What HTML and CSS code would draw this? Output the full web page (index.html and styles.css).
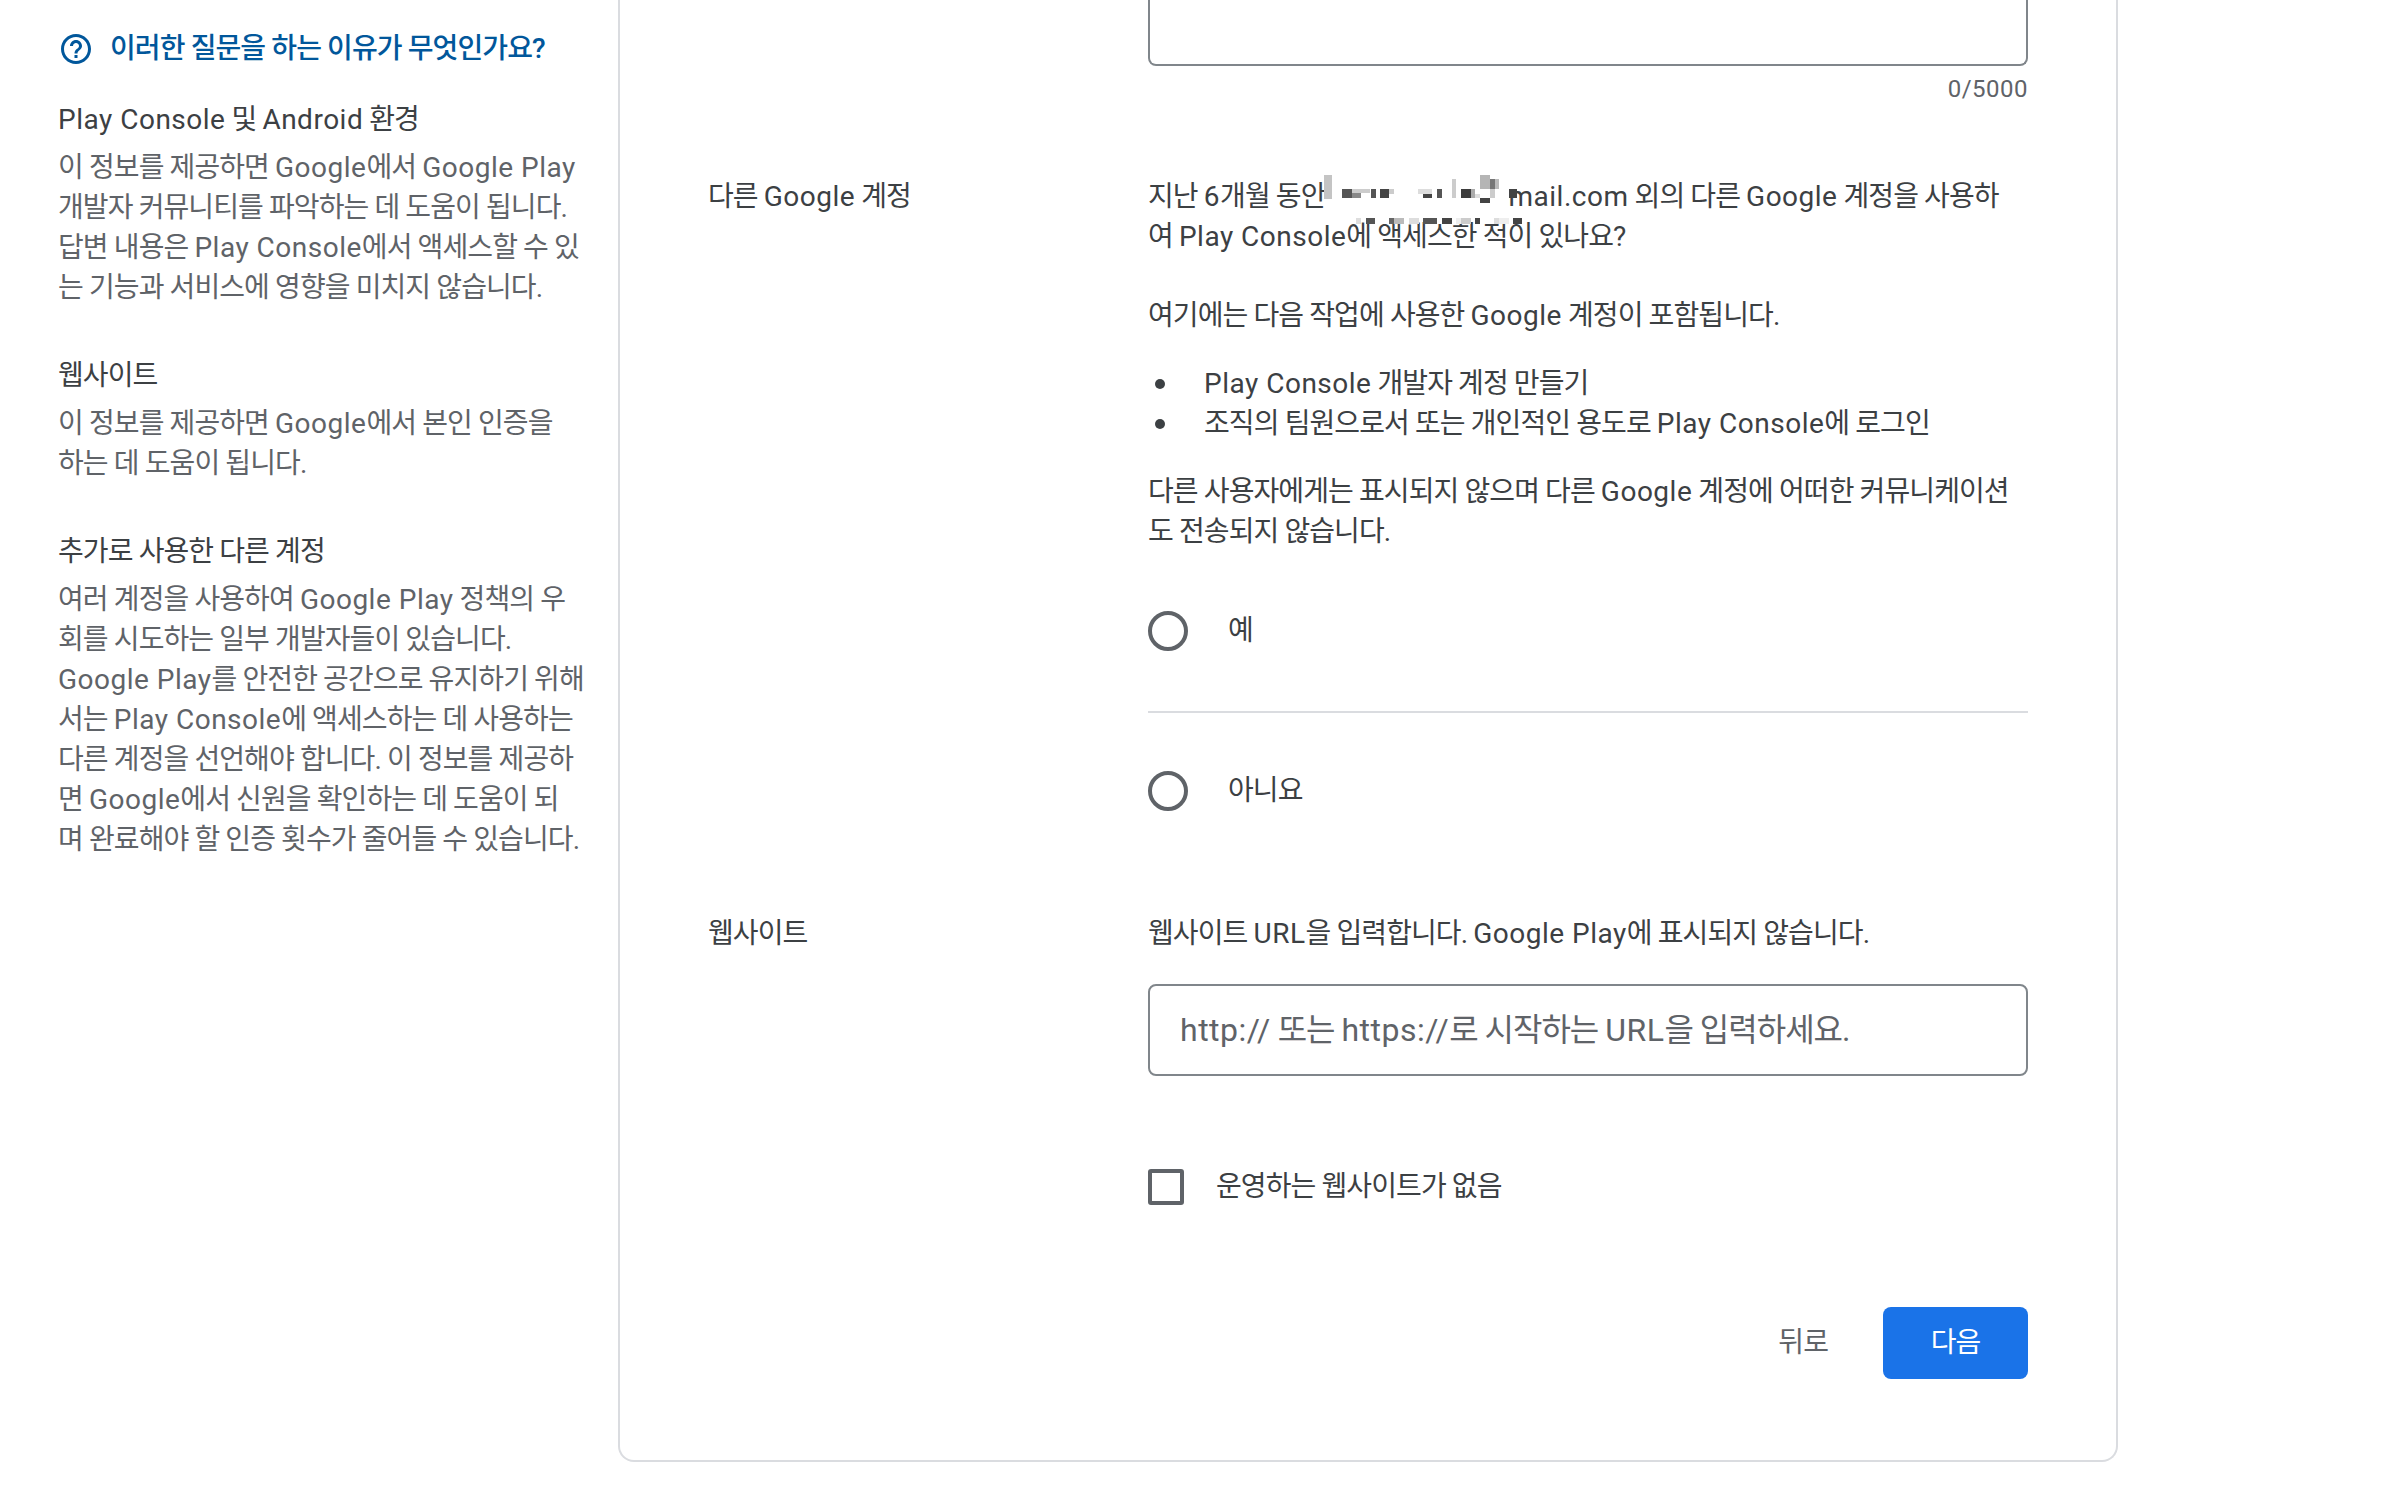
FILE: index.html
```html
<!DOCTYPE html>
<html lang="ko">

<head>
    <meta charset="UTF-8">
    <meta name="viewport" content="width=device-width, initial-scale=1.0">
    <title>Play Console 계정 정보</title>
    <link rel="stylesheet" href="styles.css">
</head>

<body>
    <div class="page">
        <aside class="help">
            <div class="help-title">
                <svg class="help-icon" viewBox="0 0 24 24">
                    <path d="M11 18h2v-2h-2v2zm1-16C6.48 2 2 6.48 2 12s4.48 10 10 10 10-4.48 10-10S17.52 2 12 2zm0 18c-4.41 0-8-3.59-8-8s3.59-8 8-8 8 3.59 8 8-3.59 8-8 8zm0-14c-2.21 0-4 1.79-4 4h2c0-1.1.9-2 2-2s2 .9 2 2c0 2-3 1.75-3 5h2c0-2.25 3-2.5 3-5 0-2.21-1.79-4-4-4z" />
                </svg>
                <span>이러한 질문을 하는 이유가 무엇인가요?</span>
            </div>

            <div class="help-block">
                <h4><span class="en">Play Console</span> 및 <span class="en">Android</span> 환경</h4>
                <p>이 정보를 제공하면 <span class="en">Google</span>에서 <span class="en">Google Play</span><br>개발자 커뮤니티를 파악하는 데 도움이 됩니다.<br>답변 내용은 <span class="en">Play Console</span>에서 액세스할 수 있<br>는 기능과 서비스에 영향을 미치지 않습니다.</p>
            </div>
            <div class="help-block">
                <h4>웹사이트</h4>
                <p>이 정보를 제공하면 <span class="en">Google</span>에서 본인 인증을<br>하는 데 도움이 됩니다.</p>
            </div>
            <div class="help-block">
                <h4>추가로 사용한 다른 계정</h4>
                <p>여러 계정을 사용하여 <span class="en">Google Play</span> 정책의 우<br>회를 시도하는 일부 개발자들이 있습니다.<br><span class="en">Google Play</span>를 안전한 공간으로 유지하기 위해<br>서는 <span class="en">Play Console</span>에 액세스하는 데 사용하는<br>다른 계정을 선언해야 합니다. 이 정보를 제공하<br>면 <span class="en">Google</span>에서 신원을 확인하는 데 도움이 되<br>며 완료해야 할 인증 횟수가 줄어들 수 있습니다.</p>
            </div>
        </aside>

        <main class="card">
            <div class="textarea-row">
                <div class="textarea-box"></div>
                <div class="counter">0/5000</div>
            </div>

            <section class="form-row">
                <div class="row-label">다른 <span class="en">Google</span> 계정</div>
                <div class="row-body">
                    <p class="para">지난 <span class="en">6</span>개월 동안<span class="redact">
                            <!-- 이메일 가림 -->
                            <svg class="redact-pixels" width="200" height="52" viewBox="1320 174 200 52" shape-rendering="crispEdges">
                                <rect x="1320" y="176" width="8" height="24" fill="#c4c4c4" />
                                <rect x="1338" y="190" width="10" height="9" fill="#555" />
                                <rect x="1348" y="194" width="9" height="5" fill="#888" />
                                <rect x="1348" y="190" width="18" height="4" fill="#ccc" />
                                <rect x="1367" y="190" width="5" height="9" fill="#555" />
                                <rect x="1376" y="190" width="9" height="9" fill="#444" />
                                <rect x="1385" y="190" width="5" height="5" fill="#ccc" />
                                <rect x="1414" y="190" width="14" height="5" fill="#ddd" />
                                <rect x="1419" y="195" width="9" height="4" fill="#444" />
                                <rect x="1433" y="190" width="5" height="9" fill="#555" />
                                <rect x="1448" y="180" width="4" height="19" fill="#ccc" />
                                <rect x="1457" y="190" width="10" height="9" fill="#3c3c3c" />
                                <rect x="1467" y="190" width="4" height="9" fill="#aaa" />
                                <rect x="1471" y="195" width="5" height="4" fill="#ddd" />
                                <rect x="1476" y="176" width="10" height="14" fill="#b5b5b5" />
                                <rect x="1486" y="180" width="5" height="10" fill="#777" />
                                <rect x="1491" y="180" width="4" height="10" fill="#bbb" />
                                <rect x="1486" y="190" width="5" height="9" fill="#ccc" />
                                <rect x="1476" y="199" width="10" height="5" fill="#444" />
                                <rect x="1505" y="190" width="8" height="9" fill="#444" />
                                <rect x="1352" y="219" width="5" height="6" fill="#ddd" />
                                <rect x="1362" y="219" width="9" height="6" fill="#555" />
                                <rect x="1385" y="219" width="5" height="6" fill="#666" />
                                <rect x="1390" y="219" width="10" height="6" fill="#bbb" />
                                <rect x="1405" y="219" width="10" height="6" fill="#ddd" />
                                <rect x="1419" y="219" width="14" height="6" fill="#555" />
                                <rect x="1438" y="219" width="10" height="6" fill="#444" />
                                <rect x="1452" y="219" width="5" height="6" fill="#eee" />
                                <rect x="1457" y="219" width="10" height="6" fill="#ccc" />
                                <rect x="1471" y="219" width="5" height="6" fill="#444" />
                                <rect x="1490" y="219" width="5" height="6" fill="#ddd" />
                                <rect x="1495" y="219" width="10" height="6" fill="#eee" />
                                <rect x="1509" y="219" width="9" height="6" fill="#444" />
                            </svg>
                        </span><span class="en">mail.com</span> 외의 다른 <span class="en">Google</span> 계정을 사용하<br>여 <span class="en">Play Console</span>에 액세스한 적이 있나요?</p>
                    <p class="para gap-top">여기에는 다음 작업에 사용한 <span class="en">Google</span> 계정이 포함됩니다.</p>
                    <ul class="list">
                        <li><span class="en">Play Console</span> 개발자 계정 만들기</li>
                        <li>조직의 팀원으로서 또는 개인적인 용도로 <span class="en">Play Console</span>에 로그인</li>
                    </ul>
                    <p class="para">다른 사용자에게는 표시되지 않으며 다른 <span class="en">Google</span> 계정에 어떠한 커뮤니케이션<br>도 전송되지 않습니다.</p>
                    <div class="radio-row">
                        <span class="radio"></span>
                        <span>예</span>
                    </div>
                    <div class="radio-row second">
                        <span class="radio"></span>
                        <span>아니요</span>
                    </div>
                </div>
            </section>

            <section class="form-row site-row">
                <div class="row-label">웹사이트</div>
                <div class="row-body">
                    <p class="para">웹사이트 <span class="en">URL</span>을 입력합니다. <span class="en">Google Play</span>에 표시되지 않습니다.</p>
                    <div class="url-input">
                        <span><span class="en">http://</span> 또는 <span class="en">https://</span>로 시작하는 <span class="en">URL</span>을 입력하세요.</span>
                    </div>
                    <div class="check-row">
                        <span class="checkbox"></span>
                        <span>운영하는 웹사이트가 없음</span>
                    </div>
                </div>
            </section>

            <div class="actions">
                <button class="btn-back">뒤로</button>
                <button class="btn-next">다음</button>
            </div>
        </main>
    </div>
</body>

</html>
```

FILE: styles.css
```css
* {
    box-sizing: border-box;
}

body {
    margin: 0;
    background: #fff;
    color: #3c4043;
    font-family: Roboto, "Noto Sans CJK KR", sans-serif;
    font-size: 28px;
    line-height: 40px;
    letter-spacing: -0.9px;
}

/* Latin runs keep Roboto's tracking, Hangul is tighter */
.en {
    letter-spacing: 0.5px;
}

.page {
    display: flex;
    align-items: flex-start;
    height: 1490px;
    overflow: hidden;
}

/* Left help column */
.help {
    width: 618px;
    flex: none;
    padding: 29px 0 0 58px;
}

.help-title {
    display: flex;
    align-items: center;
    gap: 16px;
    color: #01579b;
    font-weight: 500;
}

.help-icon {
    width: 36px;
    height: 36px;
    fill: #01579b;
    flex: none;
}

.help-block {
    margin-top: 31px;
}

.help-block + .help-block {
    margin-top: 48px;
}

.help-block h4 {
    margin: 0 0 8px;
    font-size: 28px;
    font-weight: 400;
    color: #3c4043;
}

.help-block p {
    margin: 0;
    color: #5f6368;
}

/* Card */
.card {
    width: 1500px;
    height: 1462px;
    flex: none;
    border: 2px solid #dadce0;
    border-top: none;
    border-radius: 0 0 16px 16px;
    padding: 0 88px 0 88px;
}

.textarea-row {
    margin-left: 440px;
}

.textarea-box {
    height: 66px;
    border: 2px solid #80868b;
    border-top: none;
    border-radius: 0 0 8px 8px;
}

.counter {
    margin-top: 3px;
    text-align: right;
    font-size: 24px;
    line-height: 40px;
    color: #5f6368;
    letter-spacing: 0.5px;
}

.form-row {
    display: flex;
    margin-top: 68px;
}

.site-row {
    margin-top: 103px;
}

.row-label {
    width: 440px;
    flex: none;
    color: #3c4043;
}

.row-body {
    flex: 1;
    min-width: 0;
}

.para {
    margin: 0;
}

.gap-top {
    margin-top: 39px;
}

.redact {
    display: inline-block;
    position: relative;
    width: 183px;
    height: 0;
}

.redact-pixels {
    position: absolute;
    left: -2px;
    top: -33px;
}

.list {
    margin: 28px 0 0;
    padding: 0 0 0 56px;
    list-style: none;
}

.list li {
    position: relative;
}

.list li::before {
    content: "";
    position: absolute;
    left: -49px;
    top: 15px;
    width: 10px;
    height: 10px;
    border-radius: 50%;
    background: #3c4043;
}

.list + .para {
    margin-top: 28px;
}

.radio-row {
    display: flex;
    align-items: center;
    height: 40px;
    margin-top: 59px;
    gap: 40px;
    padding-bottom: 60px;
    border-bottom: 2px solid #dadce0;
    box-sizing: content-box;
}

.radio-row.second {
    margin-top: 58px;
    padding-bottom: 0;
    border-bottom: none;
}

.radio {
    width: 40px;
    height: 40px;
    border: 4px solid #5f6368;
    border-radius: 50%;
    flex: none;
}

.url-input {
    height: 92px;
    margin-top: 30px;
    padding: 0 30px;
    border: 2px solid #80868b;
    border-radius: 8px;
    display: flex;
    align-items: center;
    font-size: 32px;
    letter-spacing: -1px;
    color: #5f6368;
}

.check-row {
    display: flex;
    align-items: center;
    gap: 32px;
    margin-top: 91px;
}

.checkbox {
    width: 36px;
    height: 36px;
    border: 4px solid #5f6368;
    border-radius: 3px;
    flex: none;
}

.actions {
    display: flex;
    justify-content: flex-end;
    align-items: center;
    gap: 55px;
    margin-top: 100px;
}

.btn-back,
.btn-next {
    font: inherit;
    letter-spacing: inherit;
    border: none;
    cursor: pointer;
}

.btn-back {
    background: none;
    color: #5f6368;
    padding: 0;
}

.btn-next {
    width: 145px;
    height: 72px;
    background: #1a73e8;
    color: #fff;
    border-radius: 8px;
}
```
